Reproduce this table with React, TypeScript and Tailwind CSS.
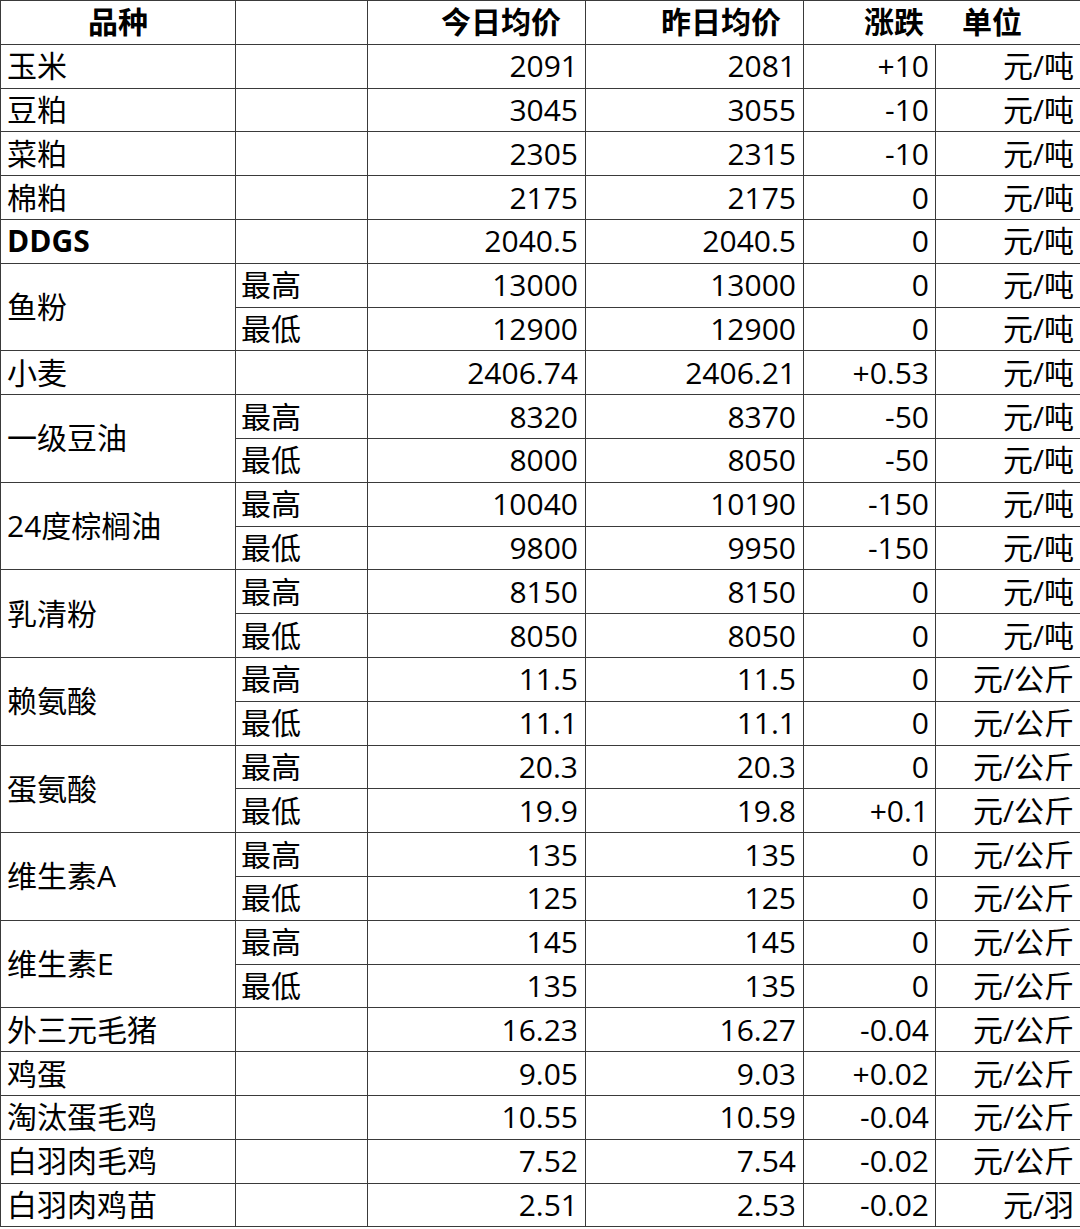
import React from 'react';

type Row = {
  name: string;
  sub?: string;
  span?: number;
  hide?: boolean;
  bold?: boolean;
  today: string;
  yest: string;
  diff: string;
  unit: string;
};

const rows: Row[] = [
  { name: '玉米', today: '2091', yest: '2081', diff: '+10', unit: '元/吨' },
  { name: '豆粕', today: '3045', yest: '3055', diff: '-10', unit: '元/吨' },
  { name: '菜粕', today: '2305', yest: '2315', diff: '-10', unit: '元/吨' },
  { name: '棉粕', today: '2175', yest: '2175', diff: '0', unit: '元/吨' },
  { name: 'DDGS', bold: true, today: '2040.5', yest: '2040.5', diff: '0', unit: '元/吨' },
  { name: '鱼粉', sub: '最高', span: 2, today: '13000', yest: '13000', diff: '0', unit: '元/吨' },
  { name: '', sub: '最低', hide: true, today: '12900', yest: '12900', diff: '0', unit: '元/吨' },
  { name: '小麦', today: '2406.74', yest: '2406.21', diff: '+0.53', unit: '元/吨' },
  { name: '一级豆油', sub: '最高', span: 2, today: '8320', yest: '8370', diff: '-50', unit: '元/吨' },
  { name: '', sub: '最低', hide: true, today: '8000', yest: '8050', diff: '-50', unit: '元/吨' },
  { name: '24度棕榈油', sub: '最高', span: 2, today: '10040', yest: '10190', diff: '-150', unit: '元/吨' },
  { name: '', sub: '最低', hide: true, today: '9800', yest: '9950', diff: '-150', unit: '元/吨' },
  { name: '乳清粉', sub: '最高', span: 2, today: '8150', yest: '8150', diff: '0', unit: '元/吨' },
  { name: '', sub: '最低', hide: true, today: '8050', yest: '8050', diff: '0', unit: '元/吨' },
  { name: '赖氨酸', sub: '最高', span: 2, today: '11.5', yest: '11.5', diff: '0', unit: '元/公斤' },
  { name: '', sub: '最低', hide: true, today: '11.1', yest: '11.1', diff: '0', unit: '元/公斤' },
  { name: '蛋氨酸', sub: '最高', span: 2, today: '20.3', yest: '20.3', diff: '0', unit: '元/公斤' },
  { name: '', sub: '最低', hide: true, today: '19.9', yest: '19.8', diff: '+0.1', unit: '元/公斤' },
  { name: '维生素A', sub: '最高', span: 2, today: '135', yest: '135', diff: '0', unit: '元/公斤' },
  { name: '', sub: '最低', hide: true, today: '125', yest: '125', diff: '0', unit: '元/公斤' },
  { name: '维生素E', sub: '最高', span: 2, today: '145', yest: '145', diff: '0', unit: '元/公斤' },
  { name: '', sub: '最低', hide: true, today: '135', yest: '135', diff: '0', unit: '元/公斤' },
  { name: '外三元毛猪', today: '16.23', yest: '16.27', diff: '-0.04', unit: '元/公斤' },
  { name: '鸡蛋', today: '9.05', yest: '9.03', diff: '+0.02', unit: '元/公斤' },
  { name: '淘汰蛋毛鸡', today: '10.55', yest: '10.59', diff: '-0.04', unit: '元/公斤' },
  { name: '白羽肉毛鸡', today: '7.52', yest: '7.54', diff: '-0.02', unit: '元/公斤' },
  { name: '白羽肉鸡苗', today: '2.51', yest: '2.53', diff: '-0.02', unit: '元/羽' },
];

const cell = 'border border-[#3a3a3a] p-0 leading-none';

export default function App() {
  return (
    <div className="w-[1080px] bg-white text-black font-['Open_Sans','Noto_Sans_CJK_SC',sans-serif] text-[30px]">
      <table className="w-[1080px] table-fixed border-collapse">
        <colgroup>
          <col className="w-[235px]" />
          <col className="w-[132px]" />
          <col className="w-[218px]" />
          <col className="w-[218px]" />
          <col className="w-[132px]" />
          <col className="w-[145px]" />
        </colgroup>
        <thead>
          <tr className="h-[43.8px] font-bold">
            <th className={`${cell} text-center`}>品种</th>
            <th className={cell}></th>
            <th className={`${cell} text-right pr-[24px]`}>今日均价</th>
            <th className={`${cell} text-right pr-[22px]`}>昨日均价</th>
            <th colSpan={2} className={cell}>
              <div className="flex justify-center gap-[38px] pl-[2px]">
                <span>涨跌</span>
                <span>单位</span>
              </div>
            </th>
          </tr>
        </thead>
        <tbody>
          {rows.map((r, i) => (
            <tr key={i} className="h-[43.8px]">
              {!r.hide && (
                <td rowSpan={r.span ?? 1} className={`${cell} pl-[6px] text-left ${r.bold ? 'font-bold' : ''}`}>
                  {r.name}
                </td>
              )}
              <td className={`${cell} pl-[5px] text-left`}>{r.sub ?? ''}</td>
              <td className={`${cell} pr-[7px] text-right`}>{r.today}</td>
              <td className={`${cell} pr-[7px] text-right`}>{r.yest}</td>
              <td className={`${cell} pr-[6px] text-right`}>{r.diff}</td>
              <td className={`${cell} pr-[6px] text-right`}>{r.unit}</td>
            </tr>
          ))}
        </tbody>
      </table>
    </div>
  );
}
